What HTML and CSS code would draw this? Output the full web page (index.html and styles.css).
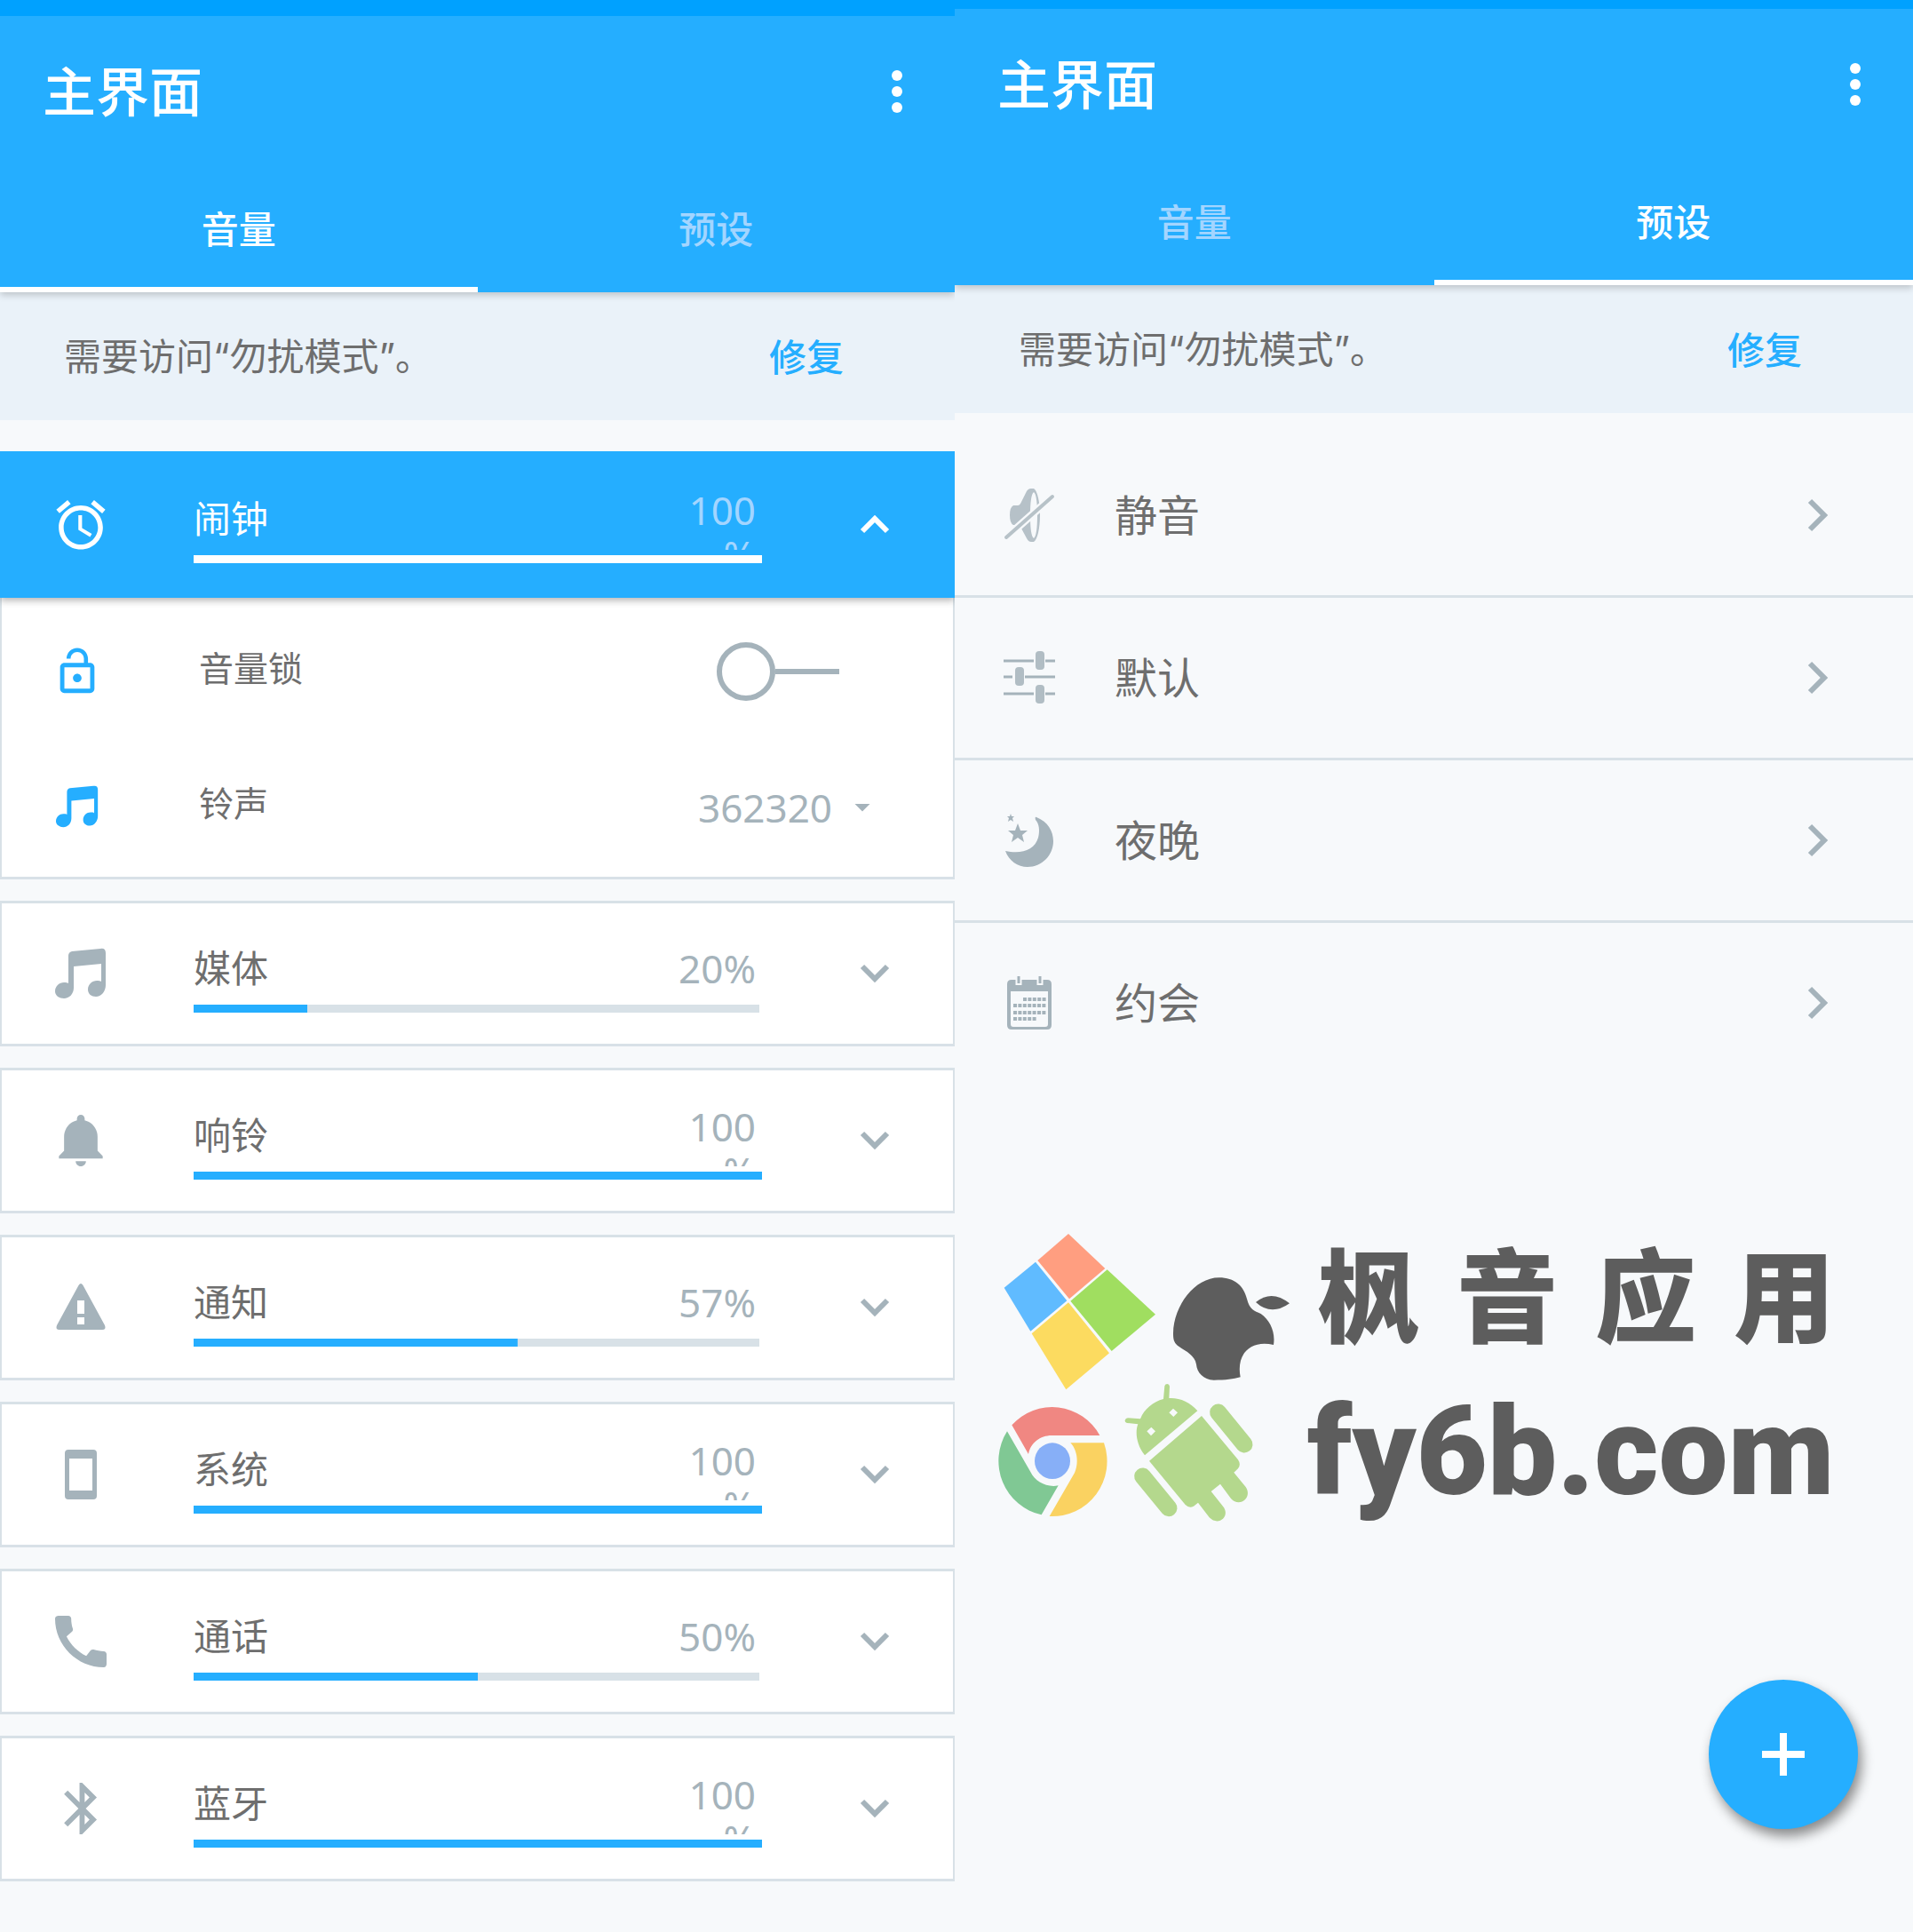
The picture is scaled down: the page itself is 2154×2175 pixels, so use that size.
FILE: index.html
```html
<!DOCTYPE html>
<html lang="zh-CN">
<head>
<meta charset="utf-8">
<meta name="viewport" content="width=device-width, initial-scale=1">
<title>主界面</title>
<link rel="stylesheet" href="styles.css">
</head>
<body>
<svg class="sprite" aria-hidden="true">
  <symbol id="dots" viewBox="0 0 12 48"><circle cx="6" cy="6" r="6"/><circle cx="6" cy="24" r="6"/><circle cx="6" cy="42" r="6"/></symbol>
  <symbol id="alarm" viewBox="1.5 1.5 21 21"><path d="M22 5.72l-4.6-3.86-1.29 1.53 4.6 3.86L22 5.72zM7.88 3.39L6.6 1.86 2 5.71l1.29 1.53 4.59-3.85zM12.5 8H11v6l4.75 2.85.75-1.23-4-2.37V8zM12 4c-4.97 0-9 4.03-9 9s4.02 9 9 9c4.97 0 9-4.03 9-9s-4.03-9-9-9zm0 16c-3.87 0-7-3.13-7-7s3.13-7 7-7 7 3.13 7 7-3.13 7-7 7z"/></symbol>
  <symbol id="lock" viewBox="0 0 24 24"><path d="M12 17c1.1 0 2-.9 2-2s-.9-2-2-2-2 .9-2 2 .9 2 2 2zm6-9h-1V6c0-2.76-2.24-5-5-5S7 3.24 7 6h1.9c0-1.71 1.39-3.1 3.1-3.1 1.71 0 3.1 1.39 3.1 3.1v2H6c-1.1 0-2 .9-2 2v10c0 1.1.9 2 2 2h12c1.1 0 2-.9 2-2V10c0-1.1-.9-2-2-2zm0 12H6V10h12v10z"/></symbol>
  <symbol id="music" viewBox="0 0 58 58"><path d="M15 9q0-4 4-5L51 1q6-1 6 5v36c0 7-5 13-11 13-5 0-9-3-9-8 0-6 5-10 10-10 2 0 4 0 5 1V18l-31 3v24c0 7-5 12-11 12-5 0-10-3-10-8 0-6 5-10 10-10 2 0 4 0 5 1z"/></symbol>
  <symbol id="bell" viewBox="1.5 2 20 20"><path d="M11.5 22c1.1 0 2-.9 2-2h-4c0 1.1.9 2 2 2zm6.5-6v-5.5c0-3.07-2.13-5.64-5-6.32V3.5c0-.83-.67-1.5-1.5-1.5S10 2.67 10 3.5v.68c-2.87.68-5 3.25-5 6.32V16l-2 2v1h17v-1l-2-2z"/></symbol>
  <symbol id="warning" viewBox="0 0 58 58"><path fill-rule="evenodd" d="M26.500 4q2.500-4 5 0L56 49q2 5-3 5H5q-5 0-3-5zM25 21v15h8V21zM25 40v8h8v-8z"/></symbol>
  <symbol id="phone" viewBox="0 0 58 58"><path fill-rule="evenodd" d="M15 1h28q4 0 4 4v48q0 4-4 4H15q-4 0-4-4V5q0-4 4-4zM16 11v36h26V11z"/></symbol>
  <symbol id="call" viewBox="3 3 18 18"><path d="M20.010 15.380c-1.230 0-2.420-.2-3.530-.56-.35-.12-.74-.03-1.010.24l-1.570 1.970c-2.830-1.350-5.480-3.900-6.890-6.830l1.950-1.660c.27-.28.35-.67.24-1.020-.37-1.110-.56-2.300-.56-3.530 0-.54-.45-.99-.99-.99H4.190C3.650 3 3 3.240 3 3.990 3 13.280 10.730 21 20.010 21c.71 0 .99-.63.99-1.180v-3.450c0-.54-.45-.99-.99-.99z"/></symbol>
  <symbol id="bluetooth" viewBox="1.5 2 20 20"><path d="M17.710 7.710L12 2h-1v7.590L6.410 5 5 6.410 10.590 12 5 17.590 6.410 19 11 14.410V22h1l5.710-5.710-4.300-4.290 4.300-4.290zM13 5.830l1.880 1.880L13 9.590V5.830zm1.880 10.460L13 18.170v-3.760l1.880 1.880z"/></symbol>
  <symbol id="down" viewBox="0 0 34 34"><path d="M3 9l14 14L31 9" fill="none" stroke="currentColor" stroke-width="6"/></symbol>
  <symbol id="up" viewBox="0 0 34 34"><path d="M3 24l14-14 14 14" fill="none" stroke="currentColor" stroke-width="6"/></symbol>
  <symbol id="next" viewBox="0 0 24 38"><path d="M3 3l16 16L3 35" fill="none" stroke="currentColor" stroke-width="6"/></symbol>
  <symbol id="mute" viewBox="0 0 60 60"><g opacity=".8"><path fill-rule="evenodd" d="M12 19h5q2 0 3-2l6-12q2-5 6-5h3c4 2 7 15 7 30s-3 28-7 30h-3q-3 0-5-4l-7-13q-1-2-3-2h-5q-4-2-4-11t4-11zM35 4c-3 2-4 13-4 26s1 24 4 26c3-2 4-13 4-26S38 6 35 4z"/></g><path d="M4 55L56 9" stroke="#f7f9fb" stroke-width="9"/><path d="M4 55L56 9" stroke="#b7c2c8" stroke-width="4" stroke-linecap="round"/></symbol>
  <symbol id="sliders" viewBox="0 0 60 60"><path d="M1 11h34M48 11h11M1 29h10M25 29h34M1 48h34M48 48h11" stroke="currentColor" stroke-width="3"/><g opacity=".85"><rect x="37" y="0" width="10" height="21" rx="4"/><rect x="14" y="18" width="10" height="21" rx="4"/><rect x="37" y="38" width="10" height="21" rx="4"/></g></symbol>
  <symbol id="moon" viewBox="0 0 60 60"><path d="M38 4C51 9 57 20 57 31 57 47 44 60 28 60 17 60 7 53 3 42 21 46 36 41 40 27 42 19 41 11 37 7q-1-4 1-3zM17 11l3 8 8 0-6 5 2 8-7-5-7 5 2-8-6-5 8 0zM9 0l1 3h3l-2 2 1 4-3-2-3 2 1-4-2-2h3z"/></symbol>
  <symbol id="calendar" viewBox="0 0 60 60"><path fill-rule="evenodd" d="M10 4h40q5 0 5 5v46q0 5-5 5H10q-5 0-5-5V9q0-5 5-5zM9 17v37q0 3 3 3h36q3 0 3-3V17z"/><path d="M18 0v10M42 0v10" stroke="#f7f9fb" stroke-width="7"/><path d="M18 0v8M42 0v8" stroke="currentColor" stroke-width="3"/><path d="M23 26h26M12 33h37M12 41h37M12 48h26" stroke="currentColor" stroke-width="4" stroke-dasharray="4 1.400"/></symbol>
</svg>

<main class="screens">
  <section class="screen screen-volume">
    <header class="appbar">
      <div class="toolbar">
        <h1 class="title">主界面</h1>
        <button class="menu" aria-label="更多"><svg><use href="#dots"/></svg></button>
      </div>
      <nav class="tabs">
        <button class="tab active">音量</button>
        <button class="tab">预设</button>
      </nav>
    </header>
    <div class="banner"><p class="banner-text">需要访问“勿扰模式”。</p><a class="fix" href="#fix">修复</a></div>

    <div class="cards">
      <article class="card open">
        <div class="card-head">
          <svg class="icon"><use href="#alarm"/></svg>
          <div class="level"><div class="level-head"><label for="v-alarm">闹钟</label><output class="value"><span>100<wbr>%</span></output></div><input id="v-alarm" class="range" type="range" value="100" style="--level:100%"></div>
          <button class="toggle" aria-label="收起"><svg><use href="#up"/></svg></button>
        </div>
        <div class="options">
          <div class="option">
            <svg class="icon-lock"><use href="#lock"/></svg>
            <label for="lock-switch">音量锁</label>
            <input id="lock-switch" class="switch" type="checkbox" role="switch">
          </div>
          <div class="option">
            <svg class="icon-tone"><use href="#music"/></svg>
            <label for="tone">铃声</label>
            <div class="picker"><select id="tone"><option>362320</option></select></div>
          </div>
        </div>
      </article>
      <article class="card"><div class="card-head">
        <svg class="icon"><use href="#music"/></svg>
        <div class="level"><div class="level-head"><label for="v-media">媒体</label><output class="value"><span>20%</span></output></div><input id="v-media" class="range" type="range" value="20" style="--level:20%"></div>
        <button class="toggle" aria-label="展开"><svg><use href="#down"/></svg></button>
      </div></article>
      <article class="card"><div class="card-head">
        <svg class="icon"><use href="#bell"/></svg>
        <div class="level"><div class="level-head"><label for="v-ring">响铃</label><output class="value"><span>100<wbr>%</span></output></div><input id="v-ring" class="range" type="range" value="100" style="--level:100%"></div>
        <button class="toggle" aria-label="展开"><svg><use href="#down"/></svg></button>
      </div></article>
      <article class="card"><div class="card-head">
        <svg class="icon"><use href="#warning"/></svg>
        <div class="level"><div class="level-head"><label for="v-notice">通知</label><output class="value"><span>57%</span></output></div><input id="v-notice" class="range" type="range" value="57" style="--level:57%"></div>
        <button class="toggle" aria-label="展开"><svg><use href="#down"/></svg></button>
      </div></article>
      <article class="card"><div class="card-head">
        <svg class="icon"><use href="#phone"/></svg>
        <div class="level"><div class="level-head"><label for="v-system">系统</label><output class="value"><span>100<wbr>%</span></output></div><input id="v-system" class="range" type="range" value="100" style="--level:100%"></div>
        <button class="toggle" aria-label="展开"><svg><use href="#down"/></svg></button>
      </div></article>
      <article class="card"><div class="card-head">
        <svg class="icon"><use href="#call"/></svg>
        <div class="level"><div class="level-head"><label for="v-call">通话</label><output class="value"><span>50%</span></output></div><input id="v-call" class="range" type="range" value="50" style="--level:50%"></div>
        <button class="toggle" aria-label="展开"><svg><use href="#down"/></svg></button>
      </div></article>
      <article class="card"><div class="card-head">
        <svg class="icon"><use href="#bluetooth"/></svg>
        <div class="level"><div class="level-head"><label for="v-bt">蓝牙</label><output class="value"><span>100<wbr>%</span></output></div><input id="v-bt" class="range" type="range" value="100" style="--level:100%"></div>
        <button class="toggle" aria-label="展开"><svg><use href="#down"/></svg></button>
      </div></article>
    </div>
  </section>

  <section class="screen screen-presets">
    <header class="appbar">
      <div class="toolbar">
        <h1 class="title">主界面</h1>
        <button class="menu" aria-label="更多"><svg><use href="#dots"/></svg></button>
      </div>
      <nav class="tabs">
        <button class="tab">音量</button>
        <button class="tab active">预设</button>
      </nav>
    </header>
    <div class="banner"><p class="banner-text">需要访问“勿扰模式”。</p><a class="fix" href="#fix">修复</a></div>

    <ul class="presets">
      <li><a class="preset" href="#silent"><svg class="preset-icon"><use href="#mute"/></svg><span>静音</span><svg class="next"><use href="#next"/></svg></a></li>
      <li><a class="preset" href="#default"><svg class="preset-icon"><use href="#sliders"/></svg><span>默认</span><svg class="next"><use href="#next"/></svg></a></li>
      <li><a class="preset" href="#night"><svg class="preset-icon"><use href="#moon"/></svg><span>夜晚</span><svg class="next"><use href="#next"/></svg></a></li>
      <li><a class="preset" href="#meeting"><svg class="preset-icon"><use href="#calendar"/></svg><span>约会</span><svg class="next"><use href="#next"/></svg></a></li>
    </ul>

    <div class="brand">
      <svg class="brand-logos" viewBox="0 51 1080 990" aria-hidden="true">
        <path fill="#ff9e80" d="M309 57L433 174 312 277 205 147z"/>
        <path fill="#60bbff" d="M198 152L304 283 181 386 92 239z"/>
        <path fill="#a0de60" d="M440 178L603 329 455 453 316 284z"/>
        <path fill="#fcdb60" d="M309 289L447 460 301 583 185 394z"/>
        <path fill="#5d5d5d" d="M818 205C870 205 901 232 912 277 921 314 937 317 959 327 990 348 1009 389 1002 432 925 414 875 462 890 541 865 548 842 551 800 551 765 550 743 525 741 498 735 460 688 447 673 430 664 418 663 410 663 393 665 300 735 205 818 205z"/>
        <path fill="#5d5d5d" d="M942 288Q996 244 1056 292 994 336 942 288z"/>
        <path fill="#f08782" d="M118 703A184 186 0 0 1 415 738H252C214 738 181 763 174 801z"/>
        <path fill="#80c894" d="M102 724L181 861C197 894 236 915 275 907L218 1006A184 186 0 0 1 102 724z"/>
        <path fill="#fad261" d="M316 763H429A184 186 0 0 1 245 1011L330 864C344 830 340 789 316 763z"/>
        <ellipse cx="255" cy="824" rx="60" ry="61" fill="#87aff7"/>
        <g fill="#b4d88d">
          <path fill-rule="evenodd" d="M567 805C536 766 535 721 544 700L507 696Q499 693 500 687 502 679 510 679L552 682C565 649 595 624 630 615L634 571Q636 564 643 564 650 565 651 572L649 612C685 610 720 625 745 655zM663 647L649 661 664 675 678 661zM589 710L574 724 588 739 603 724z"/>
          <path d="M759 672L882 820Q893 836 882 850L868 863 908 912C932 948 887 983 858 951L822 902 791 927 831 977C858 1010 816 1047 785 1015L747 965 732 977Q717 985 704 972L582 824z"/>
          <path d="M815 660L903 768M560 876L648 983" fill="none" stroke="#b4d88d" stroke-width="57" stroke-linecap="round"/>
        </g>
      </svg>
      <div class="brand-text">
        <p class="brand-name">枫音应用</p>
        <p class="brand-url">fy6b.com</p>
      </div>
    </div>

    <button class="fab" aria-label="添加"><svg viewBox="0 0 48 48"><path d="M24 0v48M0 24h48" stroke="#fff" stroke-width="8"/></svg></button>
  </section>
</main>
</body>
</html>
```

FILE: styles.css
```css
:root {
  --blue: #25aeff;
  --blue-dark: #00a1ff;
  --blue-pale: #a3d5ff;
  --page: #f7f9fb;
  --line: #d8e1e7;
  --muted: #a5b3bb;
  --text: #6e6e6e;
}

*, *::before, *::after { box-sizing: border-box; }

body {
  margin: 0;
  background: var(--page);
  color: var(--text);
  font-family: "Noto Sans", "Noto Sans CJK SC", sans-serif;
  font-size: 42px;
  line-height: 60px;
}

h1, p, ul { margin: 0; padding: 0; }
ul { list-style: none; }
a { color: inherit; text-decoration: none; }
button { padding: 0; border: 0; background: none; color: inherit; font: inherit; }
svg { display: block; fill: currentColor; }
.sprite { position: absolute; width: 0; height: 0; }

.screens {
  display: grid;
  grid-template-columns: 1075fr 1079fr;
  min-height: 100vh;
}
.screen { position: relative; min-width: 0; }

/* App bar */
.appbar {
  position: relative;
  border-top: 18px solid var(--blue-dark);
  background: var(--blue);
  color: #fff;
  box-shadow: 0 3px 8px rgba(0, 0, 0, .2);
  clip-path: inset(0 0 -14px 0);
}
.screen-presets .appbar { border-top-width: 10px; }
.toolbar {
  display: flex;
  align-items: center;
  justify-content: space-between;
  height: 170px;
  padding: 0 59px 0 48px;
}
.title { font-size: 60px; font-weight: 500; line-height: 80px; }
.menu svg { width: 12px; height: 48px; }
.tabs { display: grid; grid-template-columns: 1fr 1fr; }
.tab {
  height: 141px;
  padding-top: 4px;
  border-bottom: 6px solid transparent;
  color: var(--blue-pale);
  font-weight: 500;
}
.tab.active { border-color: #fff; color: #fff; }

.banner {
  display: flex;
  align-items: center;
  justify-content: space-between;
  height: 144px;
  padding: 2px 125px 0 72px;
  background: #eaf2f9;
}
.banner-text { font-family: Inter, "Noto Sans CJK SC", sans-serif; }
.fix { color: var(--blue); font-weight: 500; }

/* Volume cards */
.cards { display: grid; gap: 24px; padding: 35px 0 56px; }
.card-head {
  display: grid;
  grid-template-columns: 216px 1fr 215px;
  align-items: center;
  height: 164px;
  border: solid var(--line);
  border-width: 3px 2px;
  background: #fff;
}
.icon { width: 58px; height: 58px; margin-left: 60px; color: var(--muted); }
.level { align-self: start; padding-top: 38px; }
.level-head {
  display: flex;
  align-items: center;
  justify-content: space-between;
  height: 70px;
  padding-right: 7px;
}
.value {
  display: flex;
  align-items: safe center;
  justify-content: flex-end;
  width: 90px;
  height: 70px;
  overflow: hidden;
  color: var(--muted);
  font-size: 44px;
  line-height: 50px;
  text-align: right;
}
.range {
  display: block;
  appearance: none;
  width: 100%;
  height: 9px;
  margin: 6px 0 0;
  background:
    linear-gradient(var(--blue), var(--blue)) 0 0 / var(--level) 100% no-repeat,
    linear-gradient(var(--line), var(--line)) 0 0 / calc(100% - 3px) 100% no-repeat;
}
.range::-webkit-slider-thumb { appearance: none; width: 1px; height: 9px; opacity: 0; }
.toggle { width: 34px; margin-left: 110px; color: var(--muted); }
.toggle svg { width: 34px; height: 34px; }

.open .card-head {
  position: relative;
  height: 165px;
  border-color: var(--blue);
  background: var(--blue);
  color: #fff;
  box-shadow: 0 3px 8px rgba(0, 0, 0, .3);
  clip-path: inset(0 0 -14px 0);
}
.open .icon, .open .toggle { color: #fff; }
.open .value { color: var(--blue-pale); }
.open .range { background: #fff; }

.options {
  padding: 7px 0 3px;
  border: solid var(--line);
  border-width: 0 2px 3px;
  background: #fff;
}
.option {
  display: grid;
  grid-template-columns: 222px 1fr auto;
  align-items: center;
  height: 152px;
  font-size: 39px;
}
.option > svg { justify-self: start; color: var(--blue); }
.option > label { padding-bottom: 8px; }
.icon-lock { width: 58px; height: 58px; margin-left: 56px; }
.icon-tone { width: 48px; height: 48px; margin-left: 61px; }

.switch {
  display: flex;
  align-items: center;
  appearance: none;
  width: 138px;
  height: 66px;
  margin: 0 128px 0 0;
}
.switch::before {
  content: "";
  width: 66px;
  height: 66px;
  border: 6px solid var(--muted);
  border-radius: 50%;
}
.switch::after { content: ""; flex: 1; height: 6px; background: var(--muted); }

.picker { display: grid; align-items: center; width: 194px; margin-right: 93px; padding-top: 2px; }
.picker > select, .picker::after { grid-area: 1 / 1; }
.picker select {
  appearance: none;
  width: 100%;
  padding: 0;
  border: 0;
  background: none;
  color: var(--muted);
  font: inherit;
  font-size: 44px;
}
.picker::after {
  content: "";
  justify-self: end;
  width: 18px;
  height: 9px;
  background: var(--muted);
  clip-path: polygon(0 0, 100% 0, 50% 100%);
  pointer-events: none;
}

/* Presets */
.presets { padding-top: 25px; }
.presets li + li { border-top: 3px solid var(--line); }
.preset {
  display: grid;
  grid-template-columns: 180px 1fr auto;
  align-items: center;
  height: 180px;
  padding-right: 95px;
  font-size: 48px;
}
.preset-icon { width: 60px; height: 60px; margin-left: 54px; color: var(--muted); }
.next { width: 24px; height: 38px; color: var(--muted); }

.brand {
  display: grid;
  grid-template-columns: 360px 594px;
  gap: 12px;
  padding: 168px 0 0 25px;
  color: #5d5d5d;
}
.brand-logos { width: 360px; height: 330px; }
.brand-name {
  padding-left: 12px;
  font-size: 114px;
  font-weight: 900;
  line-height: 142px;
  text-align-last: justify;
}
.brand-url { font-family: Roboto, sans-serif; font-size: 139px; font-weight: 900; line-height: 212px; }

.fab {
  position: absolute;
  right: 62px;
  bottom: 116px;
  display: grid;
  place-items: center;
  width: 168px;
  height: 168px;
  border-radius: 50%;
  background: var(--blue);
  box-shadow: 4px 8px 14px rgba(0, 0, 0, .45);
}
.fab svg { width: 48px; height: 48px; }
```
